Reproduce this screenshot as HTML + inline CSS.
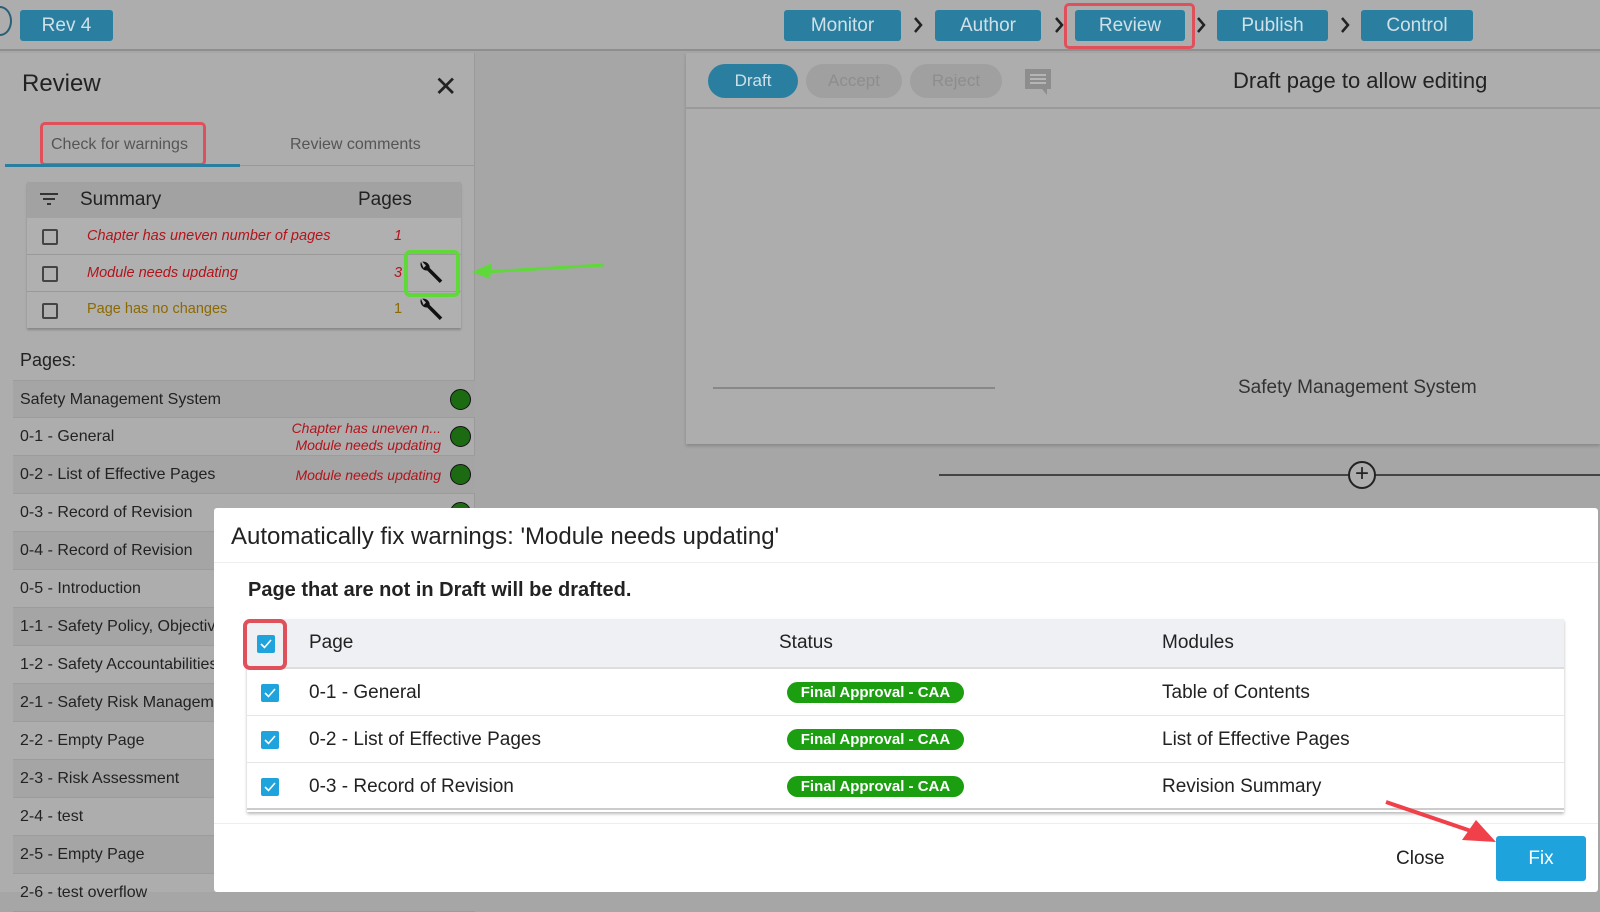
<!DOCTYPE html>
<html><head><meta charset="utf-8">
<style>
*{box-sizing:border-box;margin:0;padding:0}
body{width:1600px;height:892px;overflow:hidden;background:#a6a6a6;font-family:"Liberation Sans",sans-serif;position:relative;color:#222}
.a{position:absolute}
.top{left:0;top:0;width:1600px;height:51px;background:#adadad;border-bottom:2px solid #8e8e8e}
.nb{position:absolute;top:10px;height:31px;background:#2a7fa0;color:#cfe0e8;border-radius:3px;font-size:19px;line-height:31px;text-align:center}
.chev{position:absolute;top:15px}
.left{left:0;top:53px;width:475px;height:839px;background:#adadad;border-right:1px solid #9a9a9a}
.row{position:absolute;left:13px;width:462px;height:38px;border-bottom:1px solid #9c9c9c;font-size:16px;line-height:38px;padding-left:7px;color:#222}
.dot{position:absolute;right:4px;top:8px;width:21px;height:21px;border-radius:50%;background:#1c6b12;border:1.5px solid #111}
.warn{position:absolute;right:34px;color:#b3141c;font-style:italic;font-size:14px;text-align:right}
.cb{position:absolute;width:16px;height:16px;border:2px solid #444;border-radius:2px}
.modal{left:214px;top:508px;width:1384px;height:384px;background:#fff;border-radius:3px}
.tr{position:absolute;left:33px;width:1317px;border-bottom:1px solid #e6e6e6;font-size:19px;color:#222}
.ck{position:absolute;width:18px;height:18px;background:#1fa3dc;border-radius:2px}
.ck svg{position:absolute;left:2px;top:3px}
.badge{position:absolute;left:540px;width:177px;height:21px;border-radius:11px;background:#1b9e10;color:#fff;font-size:15px;font-weight:bold;line-height:21px;text-align:center}
</style></head><body>
<div class="a top"></div>
<div class="a" style="left:-12px;top:6px;width:24px;height:30px;border:2px solid #2a5f78;border-radius:50%"></div>
<div class="nb" style="left:20px;width:93px">Rev 4</div>
<div class="nb" style="left:784px;width:117px">Monitor</div>
<svg class="chev" style="left:912px" width="12" height="20"><path d="M3 3l6 7-6 7" stroke="#222" stroke-width="2.5" fill="none"/></svg>
<div class="nb" style="left:935px;width:106px">Author</div>
<svg class="chev" style="left:1053px" width="12" height="20"><path d="M3 3l6 7-6 7" stroke="#222" stroke-width="2.5" fill="none"/></svg>
<div class="nb" style="left:1075px;width:110px">Review</div>
<div class="a" style="left:1064px;top:3px;width:131px;height:46px;border:3px solid #e0505a;border-radius:5px"></div>
<svg class="chev" style="left:1195px" width="12" height="20"><path d="M3 3l6 7-6 7" stroke="#222" stroke-width="2.5" fill="none"/></svg>
<div class="nb" style="left:1217px;width:111px">Publish</div>
<svg class="chev" style="left:1339px" width="12" height="20"><path d="M3 3l6 7-6 7" stroke="#222" stroke-width="2.5" fill="none"/></svg>
<div class="nb" style="left:1361px;width:112px">Control</div>

<div class="a left"></div>
<div class="a" style="left:22px;top:70px;font-size:24px;color:#222">Review</div>
<div class="a" style="left:434px;top:70px;font-size:28px;color:#222">✕</div>
<div class="a" style="left:51px;top:136px;font-size:16px;color:#555">Check for warnings</div>
<div class="a" style="left:290px;top:136px;font-size:16px;color:#555">Review comments</div>
<div class="a" style="left:40px;top:122px;width:166px;height:44px;border:3px solid #e0505a;border-radius:5px"></div>
<div class="a" style="left:5px;top:165px;width:470px;height:1px;background:#999"></div>
<div class="a" style="left:5px;top:164px;width:235px;height:3px;background:#2a7fa0"></div>

<div class="a" style="left:27px;top:182px;width:434px;height:146px;background:#b0b0b0;box-shadow:0 2px 2px #888"></div>
<div class="a" style="left:27px;top:182px;width:434px;height:36px;background:#a2a2a2"></div>
<svg class="a" style="left:39px;top:191px" width="20" height="16"><path d="M1 3h18M4 8h12M8 13h4" stroke="#333" stroke-width="2"/></svg>
<div class="a" style="left:80px;top:189px;font-size:19px">Summary</div>
<div class="a" style="left:358px;top:189px;font-size:19px">Pages</div>
<div class="a" style="left:27px;top:254px;width:434px;height:1px;background:#999"></div>
<div class="a" style="left:27px;top:291px;width:434px;height:1px;background:#999"></div>
<div class="cb" style="left:42px;top:229px"></div>
<div class="cb" style="left:42px;top:266px"></div>
<div class="cb" style="left:42px;top:303px"></div>
<div class="a" style="left:87px;top:228px;font-size:14.5px;font-style:italic;color:#b3141c">Chapter has uneven number of pages</div>
<div class="a" style="left:87px;top:265px;font-size:14.5px;font-style:italic;color:#b3141c">Module needs updating</div>
<div class="a" style="left:87px;top:301px;font-size:14.5px;color:#8c6a00">Page has no changes</div>
<div class="a" style="left:394px;top:228px;font-size:14.5px;font-style:italic;color:#b3141c">1</div>
<div class="a" style="left:394px;top:265px;font-size:14.5px;font-style:italic;color:#b3141c">3</div>
<div class="a" style="left:394px;top:301px;font-size:14.5px;color:#8c6a00">1</div>
<svg class="a" style="left:416px;top:258px" width="30" height="30" viewBox="0 0 24 24"><path d="M4 3 a5 5 0 0 0 5 7 l10 10 2-2 -10-10 a5 5 0 0 0-6-5 l3 3-2 2z" fill="#111"/></svg>
<svg class="a" style="left:416px;top:295px" width="30" height="30" viewBox="0 0 24 24"><path d="M4 3 a5 5 0 0 0 5 7 l10 10 2-2 -10-10 a5 5 0 0 0-6-5 l3 3-2 2z" fill="#111"/></svg>
<div class="a" style="left:404px;top:250px;width:56px;height:47px;border:4px solid #5fd83a;border-radius:6px"></div>
<svg class="a" style="left:470px;top:255px" width="135" height="24"><line x1="134" y1="10" x2="14" y2="17" stroke="#5fd83a" stroke-width="3"/><polygon points="2,17 22,8 20,24" fill="#5fd83a"/></svg>

<div class="a" style="left:20px;top:350px;font-size:18px">Pages:</div>
<div class="row" style="top:380px;background:#a5a5a5;border-top:1px solid #9c9c9c">Safety Management System<div class="dot"></div></div>
<div class="row" style="top:418px">0-1 - General<div class="warn" style="top:2px;line-height:17px">Chapter has uneven n...<br>Module needs updating</div><div class="dot"></div></div>
<div class="row" style="top:456px;background:#a5a5a5">0-2 - List of Effective Pages<div class="warn" style="top:0">Module needs updating</div><div class="dot"></div></div>
<div class="row" style="top:494px">0-3 - Record of Revision<div class="dot"></div></div>
<div class="row" style="top:532px;background:#a5a5a5">0-4 - Record of Revision</div>
<div class="row" style="top:570px">0-5 - Introduction</div>
<div class="row" style="top:608px;background:#a5a5a5">1-1 - Safety Policy, Objectives</div>
<div class="row" style="top:646px">1-2 - Safety Accountabilities</div>
<div class="row" style="top:684px;background:#a5a5a5">2-1 - Safety Risk Management</div>
<div class="row" style="top:722px">2-2 - Empty Page</div>
<div class="row" style="top:760px;background:#a5a5a5">2-3 - Risk Assessment</div>
<div class="row" style="top:798px">2-4 - test</div>
<div class="row" style="top:836px;background:#a5a5a5">2-5 - Empty Page</div>
<div class="row" style="top:874px">2-6 - test overflow</div>

<div class="a" style="left:686px;top:53px;width:914px;height:391px;background:#adadad;box-shadow:0 2px 3px #888"></div>
<div class="a" style="left:686px;top:107px;width:914px;height:2px;background:#9a9a9a"></div>
<div class="a" style="left:708px;top:64px;width:90px;height:34px;border-radius:17px;background:#2a7fa0;color:#cfe0e8;font-size:17px;line-height:34px;text-align:center">Draft</div>
<div class="a" style="left:806px;top:64px;width:96px;height:34px;border-radius:17px;background:#a0a0a0;color:#8d8d8d;font-size:17px;line-height:34px;text-align:center">Accept</div>
<div class="a" style="left:910px;top:64px;width:92px;height:34px;border-radius:17px;background:#a0a0a0;color:#8d8d8d;font-size:17px;line-height:34px;text-align:center">Reject</div>
<svg class="a" style="left:1023px;top:67px" width="30" height="30" viewBox="0 0 30 30"><path d="M2 2h26v20h-4v6l-5-6H2z" fill="#8d8d8d"/><path d="M7 8h16M7 12h16M7 16h16" stroke="#b5b5b5" stroke-width="2"/></svg>
<div class="a" style="left:1233px;top:68px;font-size:22px;color:#222">Draft page to allow editing</div>
<div class="a" style="left:713px;top:387px;width:282px;height:2px;background:#888"></div>
<div class="a" style="left:1238px;top:377px;font-size:19px;color:#333">Safety Management System</div>
<div class="a" style="left:939px;top:474px;width:661px;height:2px;background:#444"></div>
<div class="a" style="left:1348px;top:461px;width:28px;height:28px;border-radius:50%;border:2px solid #222;background:#adadad;font-size:24px;line-height:22px;text-align:center;color:#222">+</div>

<div class="a modal">
<div class="a" style="left:17px;top:15px;font-size:24px;color:#222">Automatically fix warnings: 'Module needs updating'</div>
<div class="a" style="left:0;top:54px;width:1384px;height:1px;background:#eee"></div>
<div class="a" style="left:34px;top:71px;font-size:20px;font-weight:bold;color:#222">Page that are not in Draft will be drafted.</div>
<div class="a" style="left:33px;top:111px;width:1317px;height:50px;background:#eef0f4;border-bottom:2px solid #ddd"></div>
<div class="a" style="left:33px;top:111px;width:1317px;height:193px;box-shadow:0 2px 3px #bbb"></div>
<div class="a" style="left:95px;top:124px;font-size:19px">Page</div>
<div class="a" style="left:565px;top:124px;font-size:19px">Status</div>
<div class="a" style="left:948px;top:124px;font-size:19px">Modules</div>
<div class="ck" style="left:43px;top:127px"><svg width="14" height="12"><path d="M2 6l3.5 3.5L12 2" stroke="#fff" stroke-width="1.6" fill="none"/></svg></div>
<div class="a" style="left:29px;top:111px;width:44px;height:51px;border:4px solid #e0505a;border-radius:7px"></div>
<div class="tr" style="top:161px;height:47px;line-height:47px"><span style="position:absolute;left:62px">0-1 - General</span><div class="badge" style="top:13px">Final Approval - CAA</div><span style="position:absolute;left:915px">Table of Contents</span><div class="ck" style="left:14px;top:15px"><svg width="14" height="12"><path d="M2 6l3.5 3.5L12 2" stroke="#fff" stroke-width="1.6" fill="none"/></svg></div></div>
<div class="tr" style="top:208px;height:47px;line-height:47px"><span style="position:absolute;left:62px">0-2 - List of Effective Pages</span><div class="badge" style="top:13px">Final Approval - CAA</div><span style="position:absolute;left:915px">List of Effective Pages</span><div class="ck" style="left:14px;top:15px"><svg width="14" height="12"><path d="M2 6l3.5 3.5L12 2" stroke="#fff" stroke-width="1.6" fill="none"/></svg></div></div>
<div class="tr" style="top:255px;height:47px;line-height:47px;border-bottom:2px solid #ccc"><span style="position:absolute;left:62px">0-3 - Record of Revision</span><div class="badge" style="top:13px">Final Approval - CAA</div><span style="position:absolute;left:915px">Revision Summary</span><div class="ck" style="left:14px;top:15px"><svg width="14" height="12"><path d="M2 6l3.5 3.5L12 2" stroke="#fff" stroke-width="1.6" fill="none"/></svg></div></div>
<div class="a" style="left:0;top:315px;width:1384px;height:1px;background:#eee"></div>
<div class="a" style="left:1182px;top:340px;font-size:19px;color:#222">Close</div>
<div class="a" style="left:1282px;top:328px;width:90px;height:45px;background:#1fa3dc;border-radius:3px;color:#fff;font-size:19px;line-height:45px;text-align:center">Fix</div>
<svg class="a" style="left:1170px;top:292px" width="115" height="45"><line x1="2" y1="2" x2="90" y2="32" stroke="#f0404a" stroke-width="4"/><polygon points="112,42 78,40 92,20" fill="#f0404a"/></svg>
</div>
</body></html>
